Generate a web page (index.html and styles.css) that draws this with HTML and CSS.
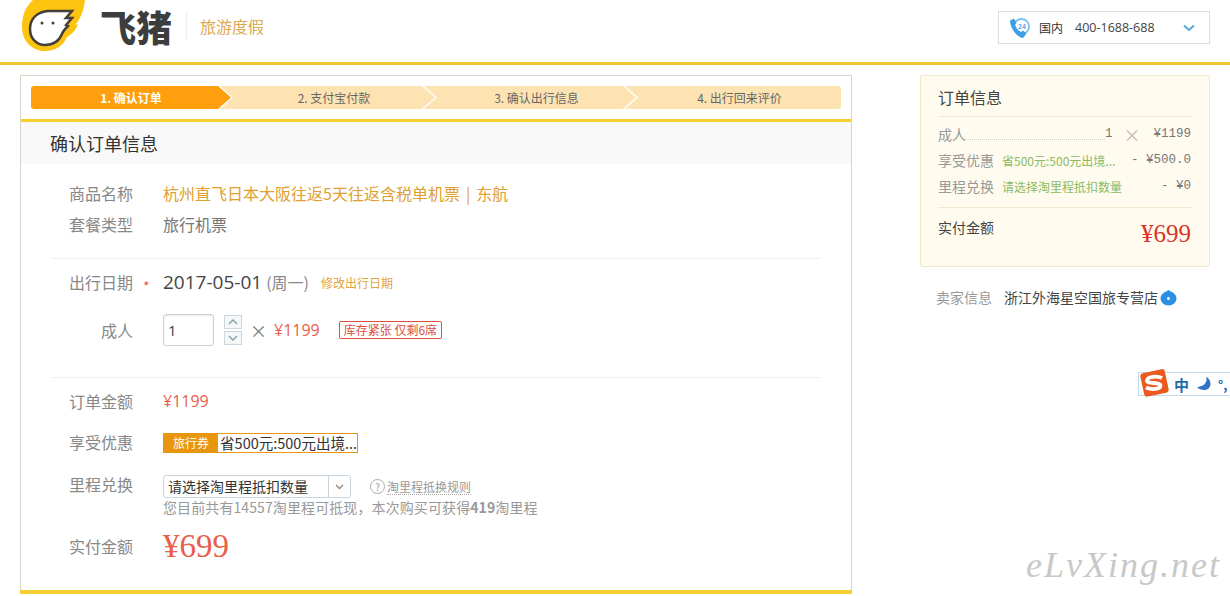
FILE: index.html
```html
<!DOCTYPE html>
<html lang="zh-CN">
<head>
  <meta charset="UTF-8">
  <title>确认订单信息</title>
  <link rel="stylesheet" href="styles.css">
</head>
<body>
  <div class="header">
    <div class="brand">
      <svg class="logo-mark" width="64" height="52" viewBox="0 0 64 52">
        <path d="M11 0C3 7 0 16 0 27C0 41 10 51 23 51C33 51 41 46 45 37C50 34 54 30 56 24L53 25C58 20 62 10 63 0Z" fill="#fcc30f"/>
        <path d="M8 29C8 18 16 11 28 11L50 11L44 18L50 18L44 25L46 26C43 29 41 31 40 34C37 41 31 45 23 45C14 45 8 38 8 29Z" fill="#fff" stroke="#443f3a" stroke-width="2.5"/>
        <circle cx="20" cy="23" r="1.500" fill="#443f3a"/>
        <circle cx="31" cy="23" r="1.500" fill="#443f3a"/>
      </svg>
      <span class="logo-text">飞猪</span>
      <span class="brand-sub">旅游度假</span>
    </div>
    <div class="phone">
      <svg class="phone-icon" width="20" height="20" viewBox="0 0 20 20">
        <circle cx="11.5" cy="8.5" r="7.500" fill="#fff" stroke="#7cc0ee" stroke-width="1.8"/>
        <path d="M0 2.500L4 0.500L6.500 5L5 7C6 10 8 12.500 11 14L13 12.500L16.500 15.500L13 20C7 19.500 0 10 0 2.500Z" fill="#3f9fe6"/>
        <text x="12" y="11" class="phone-24">24</text>
      </svg>
      <span class="phone-area">国内</span>
      <span class="phone-num">400-1688-688</span>
      <svg class="phone-arrow" width="12" height="8" viewBox="0 0 12 8"><path d="M1 1.500L6 6L11 1.500" fill="none" stroke="#5aa5d8" stroke-width="2"/></svg>
    </div>
  </div>

  <div class="main">
    <div class="order">
      <div class="steps">
        <div class="step step-1 on">1. 确认订单</div>
        <div class="step step-2">2. 支付宝付款</div>
        <div class="step step-3">3. 确认出行信息</div>
        <div class="step step-4">4. 出行回来评价</div>
      </div>
      <h2 class="order-title">确认订单信息</h2>

      <div class="section section-goods">
        <div class="row row-31">
          <span class="label">商品名称</span>
          <a class="goods-name">杭州直飞日本大阪往返5天往返含税单机票 | 东航</a>
        </div>
        <div class="row row-31">
          <span class="label">套餐类型</span>
          <span class="goods-type">旅行机票</span>
        </div>
      </div>

      <div class="section section-date">
        <div class="row row-30">
          <span class="label">出行日期<i class="req">*</i></span>
          <span class="date">2017-05-01</span>
          <span class="week">(周一)</span>
          <a class="date-edit">修改出行日期</a>
        </div>
        <div class="row row-adult">
          <span class="label">成人</span>
          <div class="qty">1</div>
          <div class="spin">
            <span class="spin-btn"><svg width="10" height="6" viewBox="0 0 10 6"><path d="M1 5L5 1L9 5" fill="none" stroke="#8fa3b0" stroke-width="1.500"/></svg></span>
            <span class="spin-btn"><svg width="10" height="6" viewBox="0 0 10 6"><path d="M1 1L5 5L9 1" fill="none" stroke="#8fa3b0" stroke-width="1.500"/></svg></span>
          </div>
          <span class="times">×</span>
          <span class="unit-price">¥1199</span>
          <span class="stock">库存紧张 仅剩6席</span>
        </div>
      </div>

      <div class="section section-pay">
        <div class="row row-30">
          <span class="label">订单金额</span>
          <span class="amount">¥1199</span>
        </div>
        <div class="row row-coupon">
          <span class="label">享受优惠</span>
          <div class="coupon"><span class="coupon-tag">旅行券</span><span class="coupon-text">省500元:500元出境...</span></div>
        </div>
        <div class="row row-miles">
          <span class="label">里程兑换</span>
          <div class="miles">
            <div class="miles-top">
              <div class="select">
                <span class="select-text">请选择淘里程抵扣数量</span>
                <span class="select-btn"><svg width="9" height="6" viewBox="0 0 9 6"><path d="M1 1L4.500 4.500L8 1" fill="none" stroke="#888" stroke-width="1.300"/></svg></span>
              </div>
              <span class="help">?</span>
              <a class="rule">淘里程抵换规则</a>
            </div>
            <div class="miles-hint">您目前共有14557淘里程可抵现，本次购买可获得<b>419</b>淘里程</div>
          </div>
        </div>
        <div class="row row-total">
          <span class="label">实付金额</span>
          <span class="total">¥699</span>
        </div>
      </div>
      <div class="order-foot"></div>
    </div>

    <div class="side">
      <div class="summary">
        <h3 class="summary-title">订单信息</h3>
        <div class="summary-list">
          <div class="summary-row">
            <span class="summary-label">成人</span>
            <span class="dots"></span>
            <span class="mono">1</span>
            <span class="summary-x">×</span>
            <span class="mono summary-unit">¥1199</span>
          </div>
          <div class="summary-row">
            <span class="summary-label">享受优惠</span>
            <span class="green">省500元:500元出境...</span>
            <span class="mono">- ¥500.0</span>
          </div>
          <div class="summary-row">
            <span class="summary-label">里程兑换</span>
            <span class="green">请选择淘里程抵扣数量</span>
            <span class="mono">- ¥0</span>
          </div>
        </div>
        <div class="summary-total">
          <span>实付金额</span>
          <span class="summary-price">¥699</span>
        </div>
      </div>
      <div class="seller">
        <span class="seller-label">卖家信息</span>
        <span class="seller-name">浙江外海星空国旅专营店</span>
        <svg class="seller-badge" width="17" height="17" viewBox="0 0 17 17">
          <path d="M8.500 1C11 3 16.500 4 16.500 9.500A8 7 0 0 1 0.500 9.500C0.500 4 6 3 8.500 1Z" fill="#2b8fe6"/>
          <circle cx="8.500" cy="9.500" r="1.500" fill="#fff"/>
        </svg>
      </div>
    </div>
  </div>

  <div class="ime">
    <svg width="30" height="28" viewBox="0 0 30 28">
      <rect x="3" y="2" width="25" height="24" rx="3" fill="#ea5a1f" transform="rotate(-12 15 14)"/>
      <path d="M23 9C18 6.500 8.500 7.500 8 11.500C7.500 15.500 21 12.500 21.500 16.500C22 20.500 12 21 7 18.500" fill="none" stroke="#fff" stroke-width="3.800"/>
    </svg>
    <div class="ime-bar">
      <span class="ime-zh">中</span>
      <svg width="15" height="14" viewBox="0 0 15 14"><path d="M10 0C12 5 8 10 1 10C4 14 14 15 14.500 7C14.500 4 13 1 10 0Z" fill="#2f74c4"/></svg>
      <span class="ime-punct">°,</span>
    </div>
  </div>
  <div class="watermark">eLvXing.net</div>
</body>
</html>
```

FILE: styles.css
```css
* {
  box-sizing: border-box;
}
html, body {
  height: 596px;
  overflow: hidden;
}
body {
  margin: 0;
  background: #fff;
  font-family: "Noto Sans CJK SC", "Liberation Sans", sans-serif;
  font-size: 14px;
  color: #666;
  position: relative;
}
a {
  text-decoration: none;
}

/* header */
.header {
  height: 65px;
  border-bottom: 3px solid #eac733;
  display: flex;
  justify-content: space-between;
  padding: 11px 20px 0 22px;
}
.brand {
  display: flex;
  align-items: center;
  height: 32px;
}
.logo-mark {
  margin-top: -11px;
  align-self: flex-start;
  flex: none;
}
.logo-text {
  margin-left: 14px;
  margin-top: -3px;
  width: 87px;
  font-size: 36px;
  font-weight: 900;
  line-height: 36px;
  color: #3d3d3d;
  border-right: 1px solid #eee;
  height: 30px;
  display: flex;
  align-items: center;
  white-space: nowrap;
}
.brand-sub {
  margin-left: 13px;
  margin-top: -2px;
  font-size: 16px;
  color: #dcaa52;
}
.phone {
  width: 212px;
  height: 33px;
  border: 1px solid #dedede;
  display: flex;
  align-items: center;
  padding-left: 11px;
  font-size: 12px;
}
.phone-icon {
  flex: none;
}
.phone-24 {
  font-size: 7px;
  font-weight: 700;
  fill: #5aa8e0;
  text-anchor: middle;
  font-family: "Liberation Sans", sans-serif;
}
.phone-area {
  margin-left: 9px;
  color: #333;
}
.phone-num {
  margin-left: 12px;
  font-size: 12.500px;
  color: #444;
  font-family: "Open Sans", "Liberation Sans", sans-serif;
}
.phone-arrow {
  margin-left: 28px;
}

/* main columns */
.main {
  display: flex;
  justify-content: space-between;
  padding: 10px 20px 0;
}
.order {
  width: 832px;
  height: 519px;
  border: 1px solid #d8d4ca;
  border-bottom: 0;
}
.side {
  width: 290px;
}

/* steps */
.steps {
  display: flex;
  height: 46px;
  padding: 10px 10px 0;
  border-bottom: 3px solid #f5cf2f;
}
.step {
  height: 23px;
  padding-left: 13px;
  line-height: 23px;
  font-size: 12px;
  text-align: center;
  background: #fde3b2;
  color: #666;
  margin-left: -11px;
  clip-path: polygon(0 0, calc(100% - 13px) 0, 100% 50%, calc(100% - 13px) 100%, 0 100%, 13px 50%);
}
.step-1 {
  width: 200px;
  padding-left: 0;
  margin-left: 0;
  border-radius: 3px 0 0 3px;
  clip-path: polygon(0 0, calc(100% - 13px) 0, 100% 50%, calc(100% - 13px) 100%, 0 100%);
}
.step-2 {
  width: 215px;
}
.step-3 {
  width: 212px;
}
.step-4 {
  width: 216px;
  border-radius: 0 3px 3px 0;
  clip-path: polygon(0 0, 100% 0, 100% 100%, 0 100%, 13px 50%);
}
.step.on {
  background: #ff9f0d;
  color: #fff;
  font-weight: 700;
}
.order-title {
  margin: 0;
  height: 42px;
  padding-left: 29px;
  background: #f9f9f9;
  font-size: 18px;
  font-weight: 400;
  line-height: 42px;
  color: #333;
}

/* form sections */
.section {
  margin: 0 30px;
}
.section-goods {
  padding-top: 13px;
  padding-bottom: 19px;
  border-bottom: 1px solid #f0f0f0;
}
.section-date {
  padding-top: 8px;
  padding-bottom: 31px;
  border-bottom: 1px solid #f0f0f0;
}
.section-pay {
  padding-top: 8px;
}
.row {
  display: flex;
  align-items: center;
}
.row-31 {
  height: 31px;
}
.row-30 {
  height: 30px;
}
.row-adult {
  height: 32px;
  margin-top: 17px;
}
.row-coupon {
  height: 31px;
  margin-top: 11px;
}
.row-coupon .label {
  margin-top: -2px;
}
.row-miles {
  align-items: flex-start;
  margin-top: 17px;
}
.row-total {
  height: 38px;
  margin-top: 12px;
}
.label {
  width: 82px;
  flex: none;
  margin-right: 30px;
  text-align: right;
  font-size: 16px;
  color: #888;
  position: relative;
}
.row-miles .label {
  margin-top: -3px;
}
.req {
  position: absolute;
  left: 92px;
  top: 6px;
  font-size: 14px;
  color: #e8604c;
  font-style: normal;
}
.goods-name {
  font-size: 16px;
  word-spacing: 2.500px;
  color: #e0a030;
}
.goods-type {
  font-size: 16px;
  color: #777;
}
.date {
  font-size: 19px;
  color: #444;
  font-family: "Open Sans", "Liberation Sans", sans-serif;
}
.week {
  margin-left: 4px;
  font-size: 16px;
  color: #888;
}
.date-edit {
  margin-left: 12px;
  font-size: 12px;
  color: #e4a43c;
}
.qty {
  width: 51px;
  height: 32px;
  border: 1px solid #c8d2da;
  border-radius: 3px;
  padding: 5px 0 0 4px;
  font-size: 15px;
  color: #444;
  font-family: "Open Sans", "Liberation Sans", sans-serif;
  box-shadow: inset 0 1px 2px #e8e8e8;
}
.spin {
  margin-left: 10px;
  display: flex;
  flex-direction: column;
  gap: 2px;
}
.spin-btn {
  width: 18px;
  height: 14px;
  border: 1px solid #ccd6de;
  background: #f4f6f8;
  display: flex;
  align-items: center;
  justify-content: center;
}
.times {
  margin-left: 8px;
  font-size: 17px;
  line-height: 17px;
  color: #777;
}
.unit-price {
  margin-left: 7px;
  font-size: 16px;
  color: #e8604c;
  font-family: "Open Sans", "Liberation Sans", sans-serif;
}
.stock {
  margin-left: 19px;
  height: 18px;
  padding: 0 4px;
  border: 1px solid #dd5040;
  border-radius: 2px;
  font-size: 12px;
  line-height: 16px;
  color: #dd5040;
}
.amount {
  font-size: 16px;
  color: #e8604c;
  font-family: "Open Sans", "Liberation Sans", sans-serif;
}
.coupon {
  width: 195px;
  height: 20px;
  border: 1px solid #e8960e;
  display: flex;
  align-items: center;
  white-space: nowrap;
}
.coupon-tag {
  width: 55px;
  height: 18px;
  background: #e8960e;
  color: #fff;
  font-size: 12px;
  line-height: 18px;
  text-align: center;
}
.coupon-text {
  margin-left: 2px;
  font-size: 14.500px;
  line-height: 18px;
  color: #333;
}
.miles-top {
  display: flex;
  align-items: center;
  height: 23px;
}
.select {
  width: 188px;
  height: 23px;
  border: 1px solid #c8d4de;
  border-radius: 3px;
  display: flex;
  font-size: 14px;
  color: #333;
}
.select-text {
  flex: 1;
  padding-left: 4px;
  line-height: 21px;
}
.select-btn {
  width: 22px;
  border-left: 1px solid #c8d4de;
  display: flex;
  align-items: center;
  justify-content: center;
}
.help {
  margin-left: 19px;
  width: 15px;
  height: 15px;
  border: 1px solid #aaa;
  border-radius: 50%;
  font-size: 10px;
  line-height: 13px;
  text-align: center;
  color: #999;
}
.rule {
  margin-left: 2px;
  font-size: 12px;
  color: #999;
  border-bottom: 1px dotted #aaa;
  line-height: 15px;
}
.miles-hint {
  margin-top: 1px;
  font-size: 14px;
  line-height: 16px;
  color: #999;
  white-space: nowrap;
  letter-spacing: 0.100px;
}
.total {
  font-size: 33px;
  line-height: 38px;
  color: #e8604c;
  font-family: "Liberation Serif", serif;
}
.order-foot {
  position: absolute;
  left: 20px;
  top: 590px;
  width: 832px;
  height: 4px;
  background: #f5cf2f;
}

/* right column */
.summary {
  height: 192px;
  padding: 0 18px 0 17px;
  background: #fffcef;
  border: 1px solid #efe9c8;
  border-radius: 2px;
  color: #888;
}
.summary-title {
  margin: 0;
  height: 41px;
  font-size: 16px;
  font-weight: 400;
  line-height: 42px;
  color: #444;
  border-bottom: 1px solid #efe9d0;
}
.summary-list {
  padding: 4px 0 8px;
  border-bottom: 1px solid #efe9d0;
}
.summary-row {
  display: flex;
  align-items: center;
  height: 26px;
  font-size: 14px;
}
.summary-label {
  color: #999;
  white-space: nowrap;
}
.dots {
  flex: 1;
  align-self: flex-end;
  margin-bottom: 7px;
  border-bottom: 1px dotted #ccc;
}
.summary-x {
  margin: 0 13px 0 11px;
  font-size: 17px;
  line-height: 17px;
  color: #bbb;
}
.green {
  flex: 1;
  margin-left: 8px;
  font-size: 12px;
  color: #8cba60;
  white-space: nowrap;
}
.mono {
  font-family: "Liberation Mono", monospace;
  font-size: 12.500px;
  color: #777;
  white-space: pre;
}
.summary-total {
  display: flex;
  justify-content: space-between;
  align-items: flex-start;
  padding-top: 9px;
  font-size: 14px;
  color: #444;
}
.summary-price {
  margin-top: 1px;
  font-size: 25px;
  line-height: 32px;
  color: #d8342a;
  font-family: "Liberation Serif", serif;
}
.seller {
  display: flex;
  align-items: center;
  margin-top: 20px;
  padding-left: 16px;
  height: 20px;
  font-size: 14px;
}
.seller-label {
  color: #999;
}
.seller-name {
  margin-left: 12px;
  color: #444;
}
.seller-badge {
  margin-left: 2px;
  flex: none;
}

/* overlays */
.ime {
  position: absolute;
  left: 1140px;
  top: 369px;
  width: 90px;
  height: 28px;
}
.ime svg:first-child {
  position: absolute;
  left: -1px;
  top: 0;
  z-index: 1;
}
.ime-bar {
  position: absolute;
  left: -2px;
  top: 3px;
  width: 92px;
  height: 24px;
  padding-left: 35px;
  background: #fff;
  border: 1px solid #c4d9ea;
  border-right: 0;
  display: flex;
  align-items: center;
  gap: 7px;
}
.ime-zh {
  font-size: 15px;
  font-weight: 700;
  color: #1f6aa8;
}
.ime-punct {
  font-size: 13px;
  font-weight: 700;
  color: #1f6aa8;
}
.watermark {
  position: absolute;
  left: 1026px;
  top: 544px;
  font-family: "Liberation Serif", serif;
  font-style: italic;
  font-size: 36px;
  letter-spacing: 2px;
  color: #c8c8c8;
  white-space: nowrap;
}
```
